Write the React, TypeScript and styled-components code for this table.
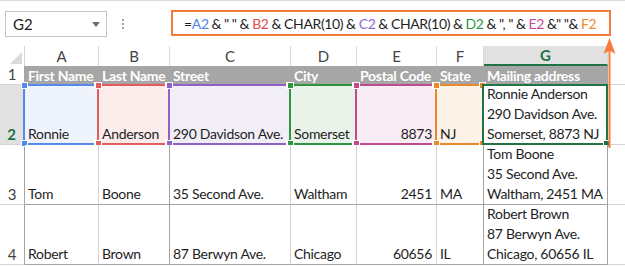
import React from 'react';
import styled, { createGlobalStyle } from 'styled-components';

const GlobalStyle = createGlobalStyle`
  html, body {
    margin: 0;
    padding: 0;
    background: #fff;
  }
  body {
    font-family: Lato, 'Liberation Sans', sans-serif;
    color: #1e1e1e;
  }
`;

const ranges = {
  A: { line: '#5588ea', fill: '#eef3fc', text: '#4f83e6' },
  B: { line: '#e45b5b', fill: '#fcecec', text: '#e24d4d' },
  C: { line: '#8c62c6', fill: '#f1eef8', text: '#9167cc' },
  D: { line: '#2f9440', fill: '#e9f3ea', text: '#2f9a43' },
  E: { line: '#c04a8e', fill: '#f8edf4', text: '#c4479a' },
  F: { line: '#e8892b', fill: '#fcf2e7', text: '#ee8a25' },
};

type RangeKey = keyof typeof ranges;

const Screen = styled.div`
  position: relative;
  width: 625px;
  height: 266px;
  overflow: hidden;
  border-top: 1px solid #dcdcdc;
  box-sizing: border-box;
`;

const FormulaBar = styled.div`
  display: flex;
  align-items: flex-start;
  height: 45px;
  padding: 9px 0 0 5px;
  box-sizing: border-box;
`;

const NameBox = styled.div`
  display: flex;
  align-items: center;
  justify-content: space-between;
  width: 102px;
  height: 26px;
  margin-top: 1px;
  padding: 0 6px 0 7px;
  border: 1px solid #c6c6c6;
  box-sizing: border-box;
  font-size: 15px;
  color: #222;
`;

const Caret = styled.span`
  width: 0;
  height: 0;
  border-left: 4px solid transparent;
  border-right: 4px solid transparent;
  border-top: 5px solid #6e6e6e;
`;

const Dots = styled.div`
  display: flex;
  flex-direction: column;
  gap: 2px;
  margin: 9px 0 0 15px;
  span {
    width: 2px;
    height: 2px;
    background: #9c9c9c;
  }
`;

const FormulaBox = styled.div`
  display: flex;
  align-items: center;
  width: 440px;
  height: 26px;
  margin-left: 47px;
  padding-left: 11px;
  border: 2px solid #f47b3b;
  box-sizing: border-box;
  font-size: 14px;
  letter-spacing: -0.36px;
  word-spacing: -0.3px;
  white-space: pre;
  color: #1e1e1e;
`;

const Ref = styled.span<{ $c: string }>`
  color: ${(p) => p.$c};
`;

const Sheet = styled.div`
  display: grid;
  grid-template-columns: 25px 74px 71px 121px 66px 80px 47px 124px 1fr;
  grid-template-rows: 20px 19px 60px 60px 60px;
  font-size: 14px;
`;

const Corner = styled.div`
  position: relative;
  border-right: 1px solid #d4d4d4;
  &::after {
    content: '';
    position: absolute;
    right: 2px;
    bottom: 2px;
    border-left: 12px solid transparent;
    border-bottom: 12px solid #dadada;
  }
`;

const ColHead = styled.div<{ $active?: boolean }>`
  display: flex;
  align-items: center;
  justify-content: center;
  border-right: 1px solid #dadada;
  border-bottom: ${(p) => (p.$active ? '2px solid #217346' : '0')};
  background: ${(p) => (p.$active ? '#e1e1e1' : '#fff')};
  color: ${(p) => (p.$active ? '#217346' : '#444')};
  font-weight: ${(p) => (p.$active ? 700 : 400)};
  font-size: 15px;
  box-sizing: border-box;
`;

const RowHead = styled.div<{ $active?: boolean }>`
  display: flex;
  align-items: flex-end;
  justify-content: center;
  padding-bottom: 1px;
  background: ${(p) => (p.$active ? '#e1e1e1' : '#fff')};
  color: ${(p) => (p.$active ? '#217346' : '#444')};
  font-weight: ${(p) => (p.$active ? 700 : 400)};
  font-size: 15px;
  border-right: ${(p) => (p.$active ? '2px solid #217346' : '1px solid #a3a3a3')};
  border-bottom: 1px solid #d4d4d4;
  box-sizing: border-box;
  line-height: 18px;
`;

const TitleCell = styled.div`
  display: flex;
  align-items: center;
  padding: 0 3px;
  background: #a6a6a6;
  color: #fff;
  font-weight: 700;
  letter-spacing: -0.3px;
  white-space: nowrap;
  overflow: hidden;
`;

const Blank = styled.div<{ $last?: boolean }>`
  border-bottom: ${(p) => (p.$last ? '0' : '1px solid #d4d4d4')};
`;

const Cell = styled.div<{ $right?: boolean; $fill?: string; $edge: string }>`
  position: relative;
  display: flex;
  flex-direction: column;
  justify-content: flex-end;
  align-items: ${(p) => (p.$right ? 'flex-end' : 'flex-start')};
  padding: 0 4px 0 3px;
  background: ${(p) => p.$fill ?? '#fff'};
  border-right: 1px solid ${(p) => p.$edge};
  border-bottom: 1px solid #a3a3a3;
  box-sizing: border-box;
  line-height: 20px;
  letter-spacing: -0.3px;
  white-space: nowrap;
`;

const Frame = styled.div<{ $c: string }>`
  position: absolute;
  top: -1px;
  left: -2px;
  right: -1px;
  bottom: -1px;
  border: 2px solid ${(p) => p.$c};
  pointer-events: none;
`;

const Handle = styled.span<{ $c: string; $y: 'top' | 'bottom'; $x: 'left' | 'right' }>`
  position: absolute;
  ${(p) => p.$y}: -4px;
  ${(p) => p.$x}: -4px;
  width: 7px;
  height: 7px;
  box-sizing: border-box;
  border: 1px solid #fff;
  background: ${(p) => p.$c};
`;

const Arrow = styled.svg`
  position: absolute;
  left: 603px;
  top: 37px;
`;

const columns: { key: string; title: string; right?: boolean; edge: string }[] = [
  { key: 'A', title: 'First Name', edge: '#d4d4d4' },
  { key: 'B', title: 'Last Name', edge: '#a3a3a3' },
  { key: 'C', title: 'Street', edge: '#d4d4d4' },
  { key: 'D', title: 'City', edge: '#d4d4d4' },
  { key: 'E', title: 'Postal Code', right: true, edge: '#d4d4d4' },
  { key: 'F', title: 'State', edge: '#a3a3a3' },
  { key: 'G', title: 'Mailing address', edge: '#a3a3a3' },
];

const people = [
  ['Ronnie', 'Anderson', '290 Davidson Ave.', 'Somerset', '8873', 'NJ'],
  ['Tom', 'Boone', '35 Second Ave.', 'Waltham', '2451', 'MA'],
  ['Robert', 'Brown', '87 Berwyn Ave.', 'Chicago', '60656', 'IL'],
];

function RangeFrame({ c, handles = 'all' }: { c: string; handles?: 'all' | 'fill' }) {
  return (
    <Frame $c={c}>
      {handles === 'all' ? (
        <>
          <Handle $c={c} $y="top" $x="left" />
          <Handle $c={c} $y="top" $x="right" />
          <Handle $c={c} $y="bottom" $x="left" />
          <Handle $c={c} $y="bottom" $x="right" />
        </>
      ) : (
        <Handle $c={c} $y="bottom" $x="right" />
      )}
    </Frame>
  );
}

function App() {
  return (
    <Screen>
      <GlobalStyle />
      <FormulaBar>
        <NameBox>
          G2
          <Caret />
        </NameBox>
        <Dots>
          <span />
          <span />
          <span />
        </Dots>
        <FormulaBox>
          =<Ref $c={ranges.A.text}>A2</Ref> &amp; " " &amp; <Ref $c={ranges.B.text}>B2</Ref> &amp; CHAR(10) &amp;{' '}
          <Ref $c={ranges.C.text}>C2</Ref> &amp; CHAR(10) &amp; <Ref $c={ranges.D.text}>D2</Ref> &amp; ", " &amp;{' '}
          <Ref $c={ranges.E.text}>E2</Ref> &amp;" "&amp; <Ref $c={ranges.F.text}>F2</Ref>
        </FormulaBox>
      </FormulaBar>

      <Sheet>
        <Corner />
        {columns.map((col) => (
          <ColHead key={col.key} $active={col.key === 'G'}>
            {col.key}
          </ColHead>
        ))}
        <Blank $last />

        <RowHead>1</RowHead>
        {columns.map((col) => (
          <TitleCell key={col.key}>{col.title}</TitleCell>
        ))}
        <Blank />

        {people.map((p, i) => {
          const address = [`${p[0]} ${p[1]}`, p[2], `${p[3]}, ${p[4]} ${p[5]}`];
          const selected = i === 0;
          return (
            <React.Fragment key={p[0]}>
              <RowHead $active={selected}>{i + 2}</RowHead>
              {columns.slice(0, 6).map((col, j) => {
                const range = selected ? ranges[col.key as RangeKey] : undefined;
                return (
                  <Cell key={col.key} $right={col.right} $fill={range?.fill} $edge={col.edge}>
                    {p[j]}
                    {range && <RangeFrame c={range.line} />}
                  </Cell>
                );
              })}
              <Cell $edge="#a3a3a3">
                {address.map((line) => (
                  <div key={line}>{line}</div>
                ))}
                {selected && <RangeFrame c="#217346" handles="fill" />}
              </Cell>
              <Blank />
            </React.Fragment>
          );
        })}
      </Sheet>

      <Arrow width="13" height="110" viewBox="0 0 13 110">
        <line x1="6.5" y1="10" x2="6.5" y2="110" stroke="#f47b3b" strokeWidth="2" />
        <path d="M6.5 0 L12.5 16 L6.5 12.5 L0.5 16 Z" fill="#f47b3b" />
      </Arrow>
    </Screen>
  );
}

export default App;
